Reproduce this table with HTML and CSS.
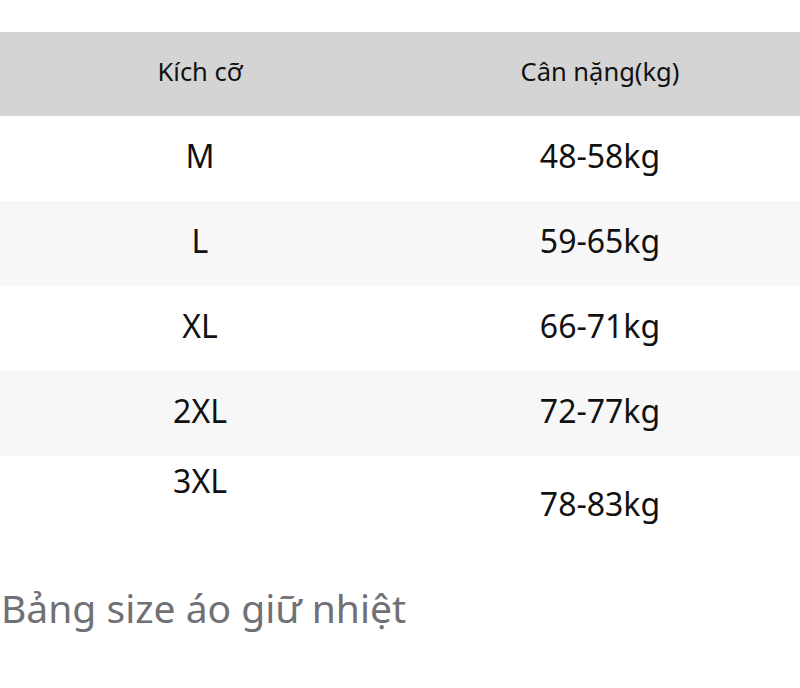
FILE: index.html
```html
<!DOCTYPE html>
<html lang="vi">
<head>
<meta charset="utf-8">
<link rel="stylesheet" href="styles.css">
</head>
<body>
<div class="page">
  <table class="size-table">
    <thead>
      <tr><th>Kích cỡ</th><th>Cân nặng(kg)</th></tr>
    </thead>
    <tbody>
      <tr><td>M</td><td>48-58kg</td></tr>
      <tr class="alt"><td>L</td><td>59-65kg</td></tr>
      <tr><td>XL</td><td>66-71kg</td></tr>
      <tr class="alt"><td>2XL</td><td>72-77kg</td></tr>
      <tr class="last"><td class="top">3XL</td><td class="low">78-83kg</td></tr>
    </tbody>
  </table>
  <p class="caption">Bảng size áo giữ nhiệt</p>
</div>
</body>
</html>
```
FILE: styles.css
```css
html, body { margin: 0; padding: 0; background: #fff; }
.page { padding-top: 32px; font-family: "Noto Sans", "Open Sans", sans-serif; color: #111; }
.size-table { width: 800px; border-collapse: collapse; table-layout: fixed; }
.size-table th { background: #d4d4d4; height: 78px; font-weight: 400; font-size: 25.5px; line-height: 34px; padding: 0 0 6px; text-align: center; }
.size-table td { height: 79px; font-size: 32px; line-height: 40px; padding: 0 0 6px; text-align: center; vertical-align: middle; }
.size-table tr.alt td { background: #f7f7f7; }
.size-table tr.last td { height: 92px; padding: 0 0 2px; }
.size-table tr.last td.top { vertical-align: top; padding: 5px 0 0; }
.caption { margin: 30px 0 0 1px; font-size: 39px; line-height: 50px; color: #707075; }
```
